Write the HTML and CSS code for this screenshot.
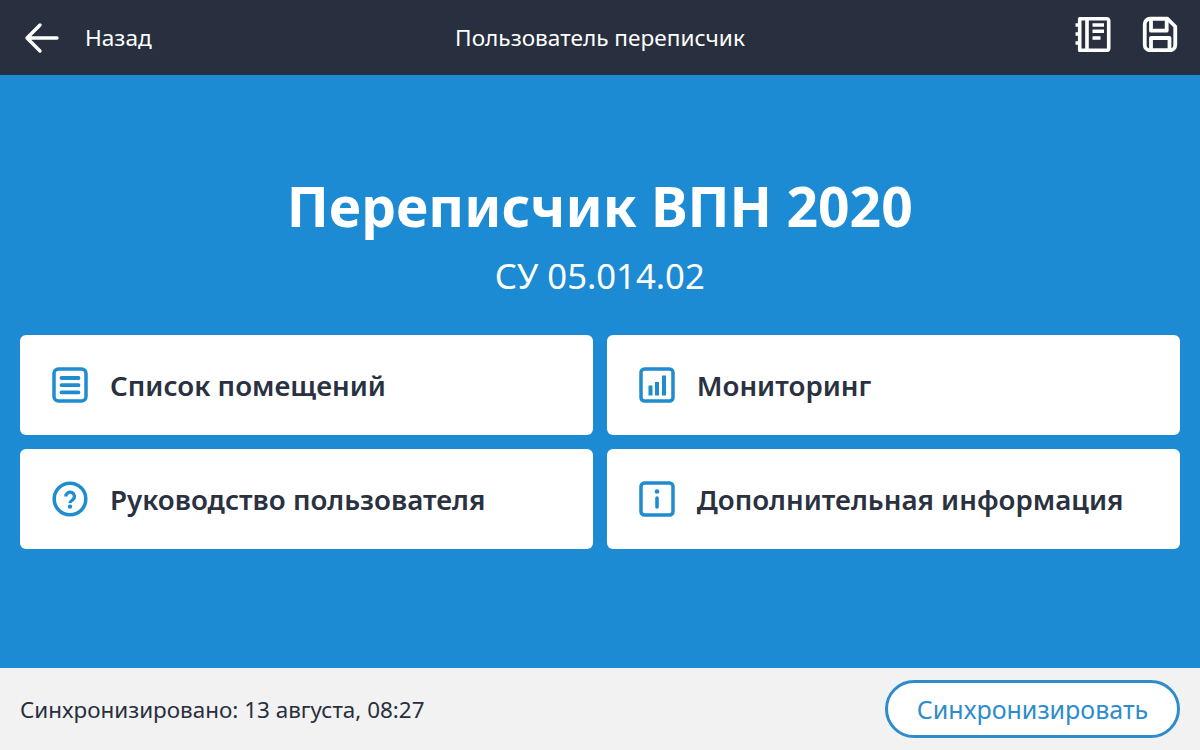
FILE: index.html
```html
<!DOCTYPE html>
<html lang="ru">
<head>
<meta charset="utf-8">
<title>Переписчик ВПН 2020</title>
<link rel="stylesheet" href="styles.css">
</head>
<body>
<header class="topbar">
  <div class="back">
    <svg width="36" height="32" viewBox="0 0 36 32" fill="none" stroke="#fff" stroke-width="3.4" stroke-linecap="round" stroke-linejoin="round"><path d="M33 16H3M16 3 3 16l13 13"/></svg>
    <span class="label">Назад</span>
  </div>
  <div class="label">Пользователь переписчик</div>
  <div class="actions">
    <svg width="36" height="36" viewBox="0 0 36 36" fill="none" stroke="#fff" stroke-width="3.6" stroke-linejoin="round"><path d="M4.700 2.700h27a2 2 0 0 1 2 2v27.600a2 2 0 0 1-2 2h-27z"/><path d="M12 2.700v31.600"/><path d="M17.500 9h11.500M17.500 15.300h11.500M17.500 22h8"/><path d="M.5 9h4.200M.5 18h4.200M.5 27h4.200"/></svg>
    <svg width="36" height="36" viewBox="0 0 36 36" fill="none" stroke="#fff" stroke-width="3.800" stroke-linejoin="round"><path d="M8 2.750h17.500l7.750 7.750V29a5.250 5.250 0 0 1-5.250 5.250H8A5.250 5.250 0 0 1 2.750 29V8A5.250 5.250 0 0 1 8 2.750z"/><path d="M9 2.750V14.700h15.700V2.750"/><path d="M9 34.250V22h18.500v12.250"/></svg>
  </div>
</header>
<main class="main">
  <h1>Переписчик ВПН 2020</h1>
  <p class="code">СУ 05.014.02</p>
  <div class="grid">
    <a class="card">
      <svg width="36" height="36" viewBox="0 0 36 36" fill="none" stroke="#1f8cd0" stroke-linecap="round"><rect x="2" y="2" width="32" height="32" rx="4.500" stroke-width="3.500"/><path d="M9.500 11h17M9.500 18.200h17M9.500 25.400h17" stroke-width="3.800"/></svg>
      <span>Список помещений</span>
    </a>
    <a class="card">
      <svg width="36" height="36" viewBox="0 0 36 36" fill="none" stroke="#1f8cd0"><rect x="2" y="2" width="32" height="32" rx="3.500" stroke-width="3.500"/><path d="M11.500 28.500v-10M18 28.500V15M25 28.500V8.500" stroke-width="4"/></svg>
      <span>Мониторинг</span>
    </a>
    <a class="card">
      <svg width="36" height="36" viewBox="0 0 36 36" fill="none" stroke="#1f8cd0"><circle cx="18" cy="18" r="15.800" stroke-width="3.500"/><path d="M13.800 15.500a4.300 4.300 0 1 1 6.800 3.400c-1.400 1-2.600 1.600-2.600 3.200" stroke-width="3.300"/><circle cx="18" cy="25.600" r="2.200" fill="#1f8cd0" stroke="none"/></svg>
      <span>Руководство пользователя</span>
    </a>
    <a class="card">
      <svg width="36" height="36" viewBox="0 0 36 36" fill="none" stroke="#1f8cd0" stroke-linecap="round"><rect x="2" y="2" width="32" height="32" rx="3.500" stroke-width="3.500"/><path d="M18 17v9" stroke-width="3.600"/><circle cx="18" cy="10.500" r="2.300" fill="#1f8cd0" stroke="none"/></svg>
      <span>Дополнительная информация</span>
    </a>
  </div>
</main>
<footer class="footer">
  <span class="status">Синхронизировано: 13 августа, 08:27</span>
  <button class="sync-btn">Синхронизировать</button>
</footer>
</body>
</html>
```
FILE: styles.css
```css
* { box-sizing: border-box; }
html, body { margin: 0; height: 100%; }
body {
  width: 1200px;
  height: 750px;
  display: flex;
  flex-direction: column;
  font-family: "Noto Sans", "Open Sans", sans-serif;
  background: #1c8bd3;
  overflow: hidden;
}
.topbar {
  height: 75px;
  flex: none;
  background: #282f3e;
  color: #fff;
  display: grid;
  grid-template-columns: 1fr auto 1fr;
  align-items: center;
  padding: 0 22px;
  font-size: 22.6px;
}
.label { padding-bottom: 1px; }
.back { display: flex; align-items: center; gap: 25px; margin-left: 2px; }
.actions { display: flex; justify-content: flex-end; gap: 31px; padding-bottom: 7px; }
.main {
  flex: 1;
  padding: 0 20.5px 0 20px;
  display: flex;
  flex-direction: column;
  align-items: center;
}
h1 {
  margin: 93px 0 0;
  font-size: 55.2px;
  line-height: 76px;
  font-weight: 700;
  color: #fff;
}
.code {
  margin: 9px 0 0;
  font-size: 34.7px;
  line-height: 46px;
  color: #fff;
}
.grid {
  margin-top: 36px;
  width: 100%;
  display: grid;
  grid-template-columns: 1fr 1fr;
  grid-auto-rows: 100px;
  gap: 14px;
}
.card {
  background: #fff;
  border-radius: 6px;
  display: flex;
  align-items: center;
  gap: 22px;
  padding-left: 32px;
  color: #2a3140;
  font-size: 27.7px;
  font-weight: 600;
}
.footer {
  height: 82.5px;
  flex: none;
  background: #f2f2f2;
  display: flex;
  align-items: center;
  justify-content: space-between;
  padding: 0 20px;
  color: #282f3e;
  font-size: 22.45px;
}
.status { padding-top: 2px; }
.sync-btn {
  width: 295px;
  height: 58px;
  border: 3px solid #2e8ccb;
  border-radius: 29px;
  background: #fff;
  color: #2e8ccb;
  font: inherit;
  font-size: 25px;
}
```
